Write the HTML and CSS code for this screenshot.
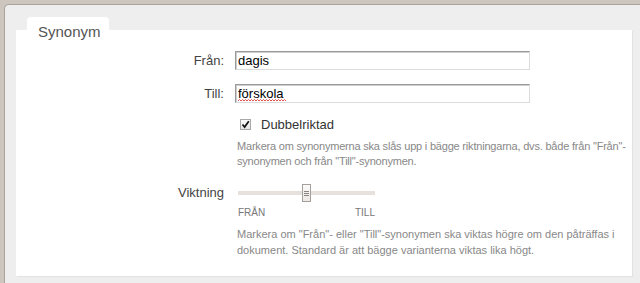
FILE: index.html
```html
<!DOCTYPE html>
<html lang="sv">
<head>
    <meta charset="UTF-8">
    <title>Synonym</title>
    <link rel="stylesheet" href="styles.css">
</head>
<body>
    <div class="panel">
        <div class="tab">Synonym</div>
        <div class="card">
            <div class="row">
                <label class="row-label" for="from">Från:</label>
                <input type="text" id="from" class="text-input" value="dagis">
            </div>
            <div class="row">
                <label class="row-label" for="to">Till:</label>
                <span class="input-wrap">
                    <input type="text" id="to" class="text-input" value="förskola">
                    <!-- spell check squiggle -->
                    <svg class="spell-mark" width="48" height="3" viewBox="0 0 48 3"><path d="M0 2 L1.5 0.5 L3 2 L4.5 0.5 L6 2 L7.5 0.5 L9 2 L10.5 0.5 L12 2 L13.5 0.5 L15 2 L16.5 0.5 L18 2 L19.5 0.5 L21 2 L22.5 0.5 L24 2 L25.5 0.5 L27 2 L28.5 0.5 L30 2 L31.5 0.5 L33 2 L34.5 0.5 L36 2 L37.5 0.5 L39 2 L40.5 0.5 L42 2 L43.5 0.5 L45 2 L46.5 0.5 L48 2" fill="none" stroke="#e04040" stroke-width="0.9"/></svg>
                </span>
            </div>
            <div class="row row-check">
                <span class="row-label"></span>
                <span class="checkbox">
                    <svg width="9" height="9" viewBox="0 0 9 9"><path d="M1.5 4.5 L3.6 7 L7.8 1.2" fill="none" stroke="#111" stroke-width="1.7"/></svg>
                </span>
                <span class="check-text">Dubbelriktad</span>
            </div>
            <div class="row">
                <span class="row-label"></span>
                <p class="help help-first">Markera om synonymerna ska slås upp i bägge riktningarna, dvs. både från "Från"-<wbr>synonymen och från "Till"-synonymen.</p>
            </div>
            <div class="row row-slider">
                <span class="row-label">Viktning</span>
                <div class="slider">
                    <div class="track">
                        <span class="handle"><i></i><i></i><i></i></span>
                    </div>
                    <div class="slider-ends">
                        <span>FRÅN</span>
                        <span>TILL</span>
                    </div>
                </div>
            </div>
            <div class="row">
                <span class="row-label"></span>
                <p class="help help-last">Markera om "Från"- eller "Till"-synonymen ska viktas högre om den påträffas i dokument. Standard är att bägge varianterna viktas lika högt.</p>
            </div>
        </div>
    </div>
</body>
</html>
```

FILE: styles.css
```css
html, body {
    margin: 0;
    height: 100%;
    overflow: hidden;
}

body {
    background: #cdc6bf;
    font-family: "Liberation Sans", Arial, sans-serif;
    color: #333;
}

.panel {
    margin: 4px 0 0 4px;
    background: #eeeeee;
    border-top: 1px solid #a9a39d;
    border-left: 1px solid #a9a39d;
    border-top-left-radius: 5px;
    padding: 12px 0 8px 11px;
}

.tab {
    width: 71px;
    height: 7px;
    margin-left: 11px;
    padding: 6px 0 0 11px;
    background: white;
    border-radius: 4px 4px 0 0;
    font-size: 15px;
    line-height: 18px;
    color: #555;
}

.card {
    width: 616px;
    background: white;
    box-shadow: 1px 1px 0 #e2e2e2;
    padding: 21px 0 18px 0;
}

.row {
    display: flex;
    align-items: center;
}

.row + .row {
    margin-top: 14px;
}

.row-label {
    width: 208px;
    flex: none;
    margin-right: 11px;
    text-align: right;
    font-size: 13px;
    color: #444;
}

.input-wrap {
    position: relative;
    display: block;
    height: 19px;
}

.text-input {
    display: block;
    width: 295px;
    height: 19px;
    box-sizing: border-box;
    margin: 0;
    padding: 0 2px;
    border: 1px solid;
    border-color: #999 #dcdcdc #dcdcdc #999;
    box-shadow: inset 1px 1px 0 #cfcfcf;
    font-family: "Liberation Sans", Arial, sans-serif;
    font-size: 13px;
    color: #000;
    outline: none;
}

.spell-mark {
    position: absolute;
    left: 3px;
    top: 15px;
}

.row-check {
    height: 14px;
}

.checkbox {
    width: 9px;
    height: 9px;
    margin-left: 5px;
    border: 1px solid #a8a8a8;
    background: linear-gradient(#fafafa, #e4e4e4);
    display: flex;
    align-items: center;
    justify-content: center;
}

.checkbox svg {
    display: block;
}

.check-text {
    margin-left: 10px;
    font-size: 13px;
    color: #333;
}

.help {
    margin: 0;
    width: 394px;
    flex: none;
    padding-left: 2px;
    font-size: 11px;
    line-height: 15px;
    color: #888;
}

.help-first {
    letter-spacing: -0.2px;
}

.row-check + .row {
    margin-top: 8px;
}

.row-slider {
    align-items: flex-start;
}

.row + .row-slider {
    margin-top: 15px;
}

.row-slider .row-label {
    line-height: 18px;
}

.slider {
    width: 137px;
    margin-left: 3px;
}

.track {
    height: 18px;
    display: flex;
    align-items: center;
    justify-content: center;
    background: linear-gradient(transparent 7px, #e6e1dc 7px, #e6e1dc 11px, transparent 11px);
}

.handle {
    width: 7px;
    height: 16px;
    border: 1px solid #a5a09b;
    background: linear-gradient(#fbfaf9, #ebe8e5);
    display: flex;
    flex-direction: column;
    align-items: center;
    justify-content: center;
    gap: 1px;
}

.handle i {
    display: block;
    width: 5px;
    height: 1px;
    background: #8a8580;
}

.slider-ends {
    display: flex;
    justify-content: space-between;
    margin-top: 5px;
    font-size: 10px;
    line-height: 12px;
    color: #777;
}

.row-slider + .row {
    margin-top: 7px;
}

.help-last {
    width: 384px;
    line-height: 16px;
}
```
